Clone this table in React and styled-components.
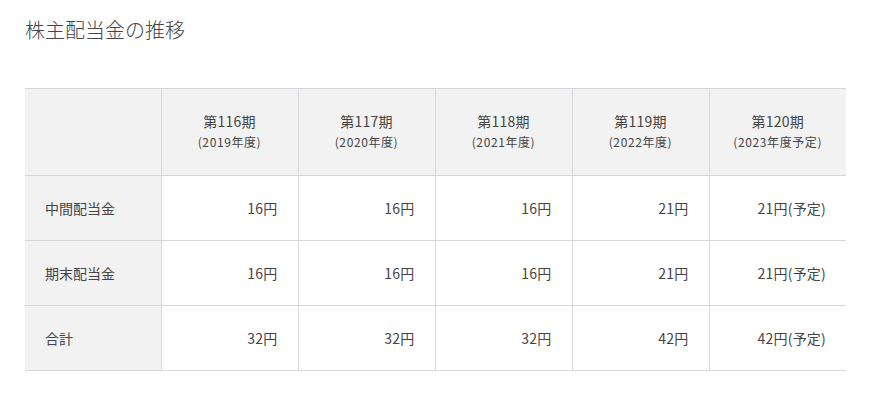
import React from 'react';
import styled, { createGlobalStyle } from 'styled-components';

const GlobalStyle = createGlobalStyle`
  body {
    margin: 0;
    background: #fff;
    font-family: "Noto Sans CJK JP", "Noto Sans", sans-serif;
    color: #444;
  }
`;

const Page = styled.div`
  padding: 15px 24px 0 25px;
  width: 821px;
`;

const Title = styled.h2`
  margin: 0 0 43px;
  font-size: 20px;
  font-weight: 300;
  line-height: 30px;
  color: #444;
`;

const Table = styled.table`
  width: 821px;
  border-collapse: collapse;
  table-layout: fixed;
  border-top: 1px solid #d5d8dc;
  border-bottom: 1px solid #d5d8dc;

  th, td {
    border-left: 1px solid #d5d8dc;
    border-bottom: 1px solid #d5d8dc;
    padding: 0;
    font-size: 14px;
    color: #444;
  }

  th:first-child, td:first-child {
    border-left: none;
  }
`;

const HeadCell = styled.th`
  height: 86px;
  background: #f2f2f2;
  font-weight: 400;
  text-align: center;
  vertical-align: middle;
`;

const Period = styled.div`
  font-size: 14px;
  line-height: 22px;
  letter-spacing: 0.2px;
  margin-top: -3px;
`;

const Year = styled.div`
  font-size: 12px;
  line-height: 20px;
  letter-spacing: 0.6px;
`;

const Label = styled.td`
  height: 64px;
  background: #f2f2f2;
  padding-left: 20px !important;
  text-align: left;
`;

const Amount = styled.td`
  text-align: right;
  padding-right: 20px !important;
  letter-spacing: 0.2px;
`;

const periods = [
  { name: '第116期', year: '(2019年度)' },
  { name: '第117期', year: '(2020年度)' },
  { name: '第118期', year: '(2021年度)' },
  { name: '第119期', year: '(2022年度)' },
  { name: '第120期', year: '(2023年度予定)' },
];

const rows = [
  { label: '中間配当金', values: ['16円', '16円', '16円', '21円', '21円(予定)'] },
  { label: '期末配当金', values: ['16円', '16円', '16円', '21円', '21円(予定)'] },
  { label: '合計', values: ['32円', '32円', '32円', '42円', '42円(予定)'] },
];

export default function App() {
  return (
    <Page>
      <GlobalStyle />
      <Title>株主配当金の推移</Title>
      <Table>
        <colgroup>
          <col style={{ width: '136px' }} />
          {periods.map(p => <col key={p.name} style={{ width: '137px' }} />)}
        </colgroup>
        <thead>
          <tr>
            <HeadCell />
            {periods.map(p => (
              <HeadCell key={p.name}>
                <Period>{p.name}</Period>
                <Year>{p.year}</Year>
              </HeadCell>
            ))}
          </tr>
        </thead>
        <tbody>
          {rows.map(r => (
            <tr key={r.label}>
              <Label>{r.label}</Label>
              {r.values.map((v, i) => <Amount key={i}>{v}</Amount>)}
            </tr>
          ))}
        </tbody>
      </Table>
    </Page>
  );
}
